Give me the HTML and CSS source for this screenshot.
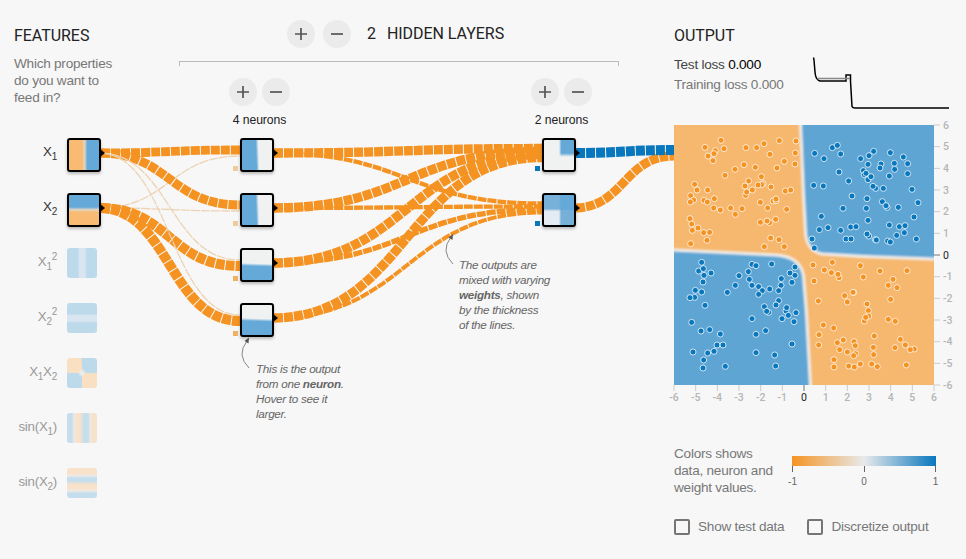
FILE: index.html
```html
<!DOCTYPE html>
<html lang="en">
<head>
<meta charset="utf-8">
<title>Neural network</title>
<link rel="stylesheet" href="styles.css">
</head>
<body>
<svg class="sprite" width="0" height="0">
  <symbol id="plus" viewBox="0 0 12 12"><path d="M6 0V12M0 6H12"/></symbol>
  <symbol id="minus" viewBox="0 0 12 12"><path d="M0 6H12"/></symbol>
</svg>
<main class="page">
  <svg class="links" width="966" height="559" id="links"></svg>

  <section class="features">
    <h4>FEATURES</h4>
    <p class="intro">Which properties<br>do you want to<br>feed in?</p>
    <ul class="feature-list">
      <li class="active"><span class="name">X<sub>1</sub></span><i class="node x1"></i></li>
      <li class="active"><span class="name">X<sub>2</sub></span><i class="node x2"></i></li>
      <li><span class="name">X<sub>1</sub><sup>2</sup></span><i class="tile x1sq"></i></li>
      <li><span class="name">X<sub>2</sub><sup>2</sup></span><i class="tile x2sq"></i></li>
      <li><span class="name">X<sub>1</sub>X<sub>2</sub></span><i class="tile x1x2"></i></li>
      <li><span class="name">sin(X<sub>1</sub>)</span><i class="tile sin1"></i></li>
      <li><span class="name">sin(X<sub>2</sub>)</span><i class="tile sin2"></i></li>
    </ul>
  </section>

  <section class="network">
    <header class="net-head">
      <button><svg><use href="#plus"/></svg></button>
      <button><svg><use href="#minus"/></svg></button>
      <span class="count">2</span><span>HIDDEN LAYERS</span>
    </header>
    <div class="bracket"></div>
    <div class="layers">
      <div class="layer">
        <div class="controls"><button><svg><use href="#plus"/></svg></button><button><svg><use href="#minus"/></svg></button></div>
        <div class="caption">4 neurons</div>
        <div class="neurons">
          <i class="node left"><b class="bias light"></b></i>
          <i class="node left"><b class="bias light"></b></i>
          <i class="node bottom"><b class="bias mid"></b></i>
          <i class="node bottom"><b class="bias mid"></b></i>
        </div>
      </div>
      <div class="layer">
        <div class="controls"><button><svg><use href="#plus"/></svg></button><button><svg><use href="#minus"/></svg></button></div>
        <div class="caption">2 neurons</div>
        <div class="neurons">
          <i class="node corner"><b class="bias blue"></b></i>
          <i class="node mixed"><b class="bias blue"></b></i>
        </div>
      </div>
    </div>
    <p class="callout one">This is the output<br>from one <b>neuron</b>.<br>Hover to see it<br>larger.</p>
    <p class="callout two">The outputs are<br>mixed with varying<br><b>weights</b>, shown<br>by the thickness<br>of the lines.</p>
  </section>

  <section class="output">
    <div class="out-head">
      <div class="metrics">
        <h4>OUTPUT</h4>
        <div class="loss test">Test loss <span>0.000</span></div>
        <div class="loss">Training loss 0.000</div>
      </div>
      <svg class="chart" width="140" height="56" fill="none">
        <path d="M1.5 .5L2 3L3 15Q3.5 21.5 6.500 23.300Q7.500 24 11 24H34V18H38.500V24L40 49.500Q40.500 51 43 51H137" stroke="#000" stroke-width="1.500"/>
        <path d="M5.500 21.500H38" stroke="#888" stroke-width="1.500"/>
      </svg>
    </div>
    <svg class="plot" width="292" height="282" id="plot">
      <defs>
        <clipPath id="frame"><rect width="260" height="260"/></clipPath>
        <filter id="soft" x="-10%" y="-10%" width="120%" height="120%"><feGaussianBlur stdDeviation="1.3"/></filter>
      </defs>
      <g clip-path="url(#frame)">
        <rect width="260" height="260" fill="#f6b76f"/>
        <g filter="url(#soft)" fill="#5fa5d4" stroke="#f0eeec" stroke-width="3">
          <path d="M126-10L126.500 0L129.500 71L131.500 108Q133 126 148 129L190 131.500L270 134.500V-10Z"/>
          <path d="M-10 124.500L0 125L103 130Q126 132 129.500 150L132.500 187L136.500 260V270H-10Z"/>
        </g>
      </g>
    </svg>
    <div class="legend">
      <p>Colors shows<br>data, neuron and<br>weight values.</p>
      <div class="scale">
        <div class="bar"></div>
        <div class="ticks"><span>-1</span><span>0</span><span>1</span></div>
      </div>
    </div>
    <div class="options">
      <label><i class="box"></i>Show test data</label>
      <label><i class="box"></i>Discretize output</label>
    </div>
  </section>
</main>
<script src="script.js"></script>
</body>
</html>
```
FILE: styles.css
```css
* { box-sizing: border-box; }
body { margin: 0; background: #f7f7f7; color: #777; font: 13.600px/17px "Liberation Sans", Arial, sans-serif; letter-spacing: -.25px; }
h4, p, ul { margin: 0; padding: 0; }
h4 { font: 400 16px/20px Roboto, sans-serif; color: #222; letter-spacing: -.05px; }
.sprite { position: absolute; }
.page { position: relative; display: grid; grid-template-columns: 110px 564px 292px; width: 966px; height: 559px; overflow: hidden; }
.links { position: absolute; left: 0; top: 0; }

.features { padding: 26px 0 0 14px; white-space: nowrap; }
.intro { margin-top: 9px; height: 83px; }
.feature-list { list-style: none; }
.feature-list li { display: flex; gap: 10px; height: 55px; color: #999; }
.feature-list .active { color: #333; }
.name { width: 43px; padding-top: 5px; text-align: right; font-size: 13.300px; }
sub, sup { font-size: 10px; line-height: 0; vertical-align: baseline; position: relative; }
sub { top: 4px; }
sup { top: -6px; }

.node { position: relative; flex: none; display: block; width: 34px; height: 34px; border: 2px solid #000; border-radius: 3px; box-shadow: 0 2px 3px rgba(0,0,0,.25); background-color: #f0f2f2; }
.node::after { content: ""; position: absolute; left: 31px; top: 9px; border: solid transparent; border-width: 4px 0 4px 5px; border-left-color: #000; }
.x1 { background: linear-gradient(90deg, #f9bb74 44%, #e3d5c0 52%, #64a9d8 61%); }
.x2 { background: linear-gradient(#64a9d8 40%, #dfd5c5 49%, #f9bb74 57%); }
.left { background: linear-gradient(88deg, #64a9d8 47%, #f0f2f2 56%); }
.bottom { background: linear-gradient(182deg, #f0f2f2 45%, #64a9d8 54%); }
.corner { background: linear-gradient(90deg, #f0f2f2 50%, transparent 58%), linear-gradient(#64a9d8 44%, #f0f2f2 56%); }
.mixed { background: linear-gradient(90deg, transparent 50%, #64a9d8 57%) 0 0 / 100% 50% no-repeat, linear-gradient(90deg, transparent 50%, #76b0d8 57%) 0 100% / 100% 50% no-repeat, linear-gradient(#77b0d9 45%, #e5ebf2 55%); }
.bias { position: absolute; left: -9px; top: 26px; width: 5px; height: 5px; }
.light { background: #eecb9c; }
.mid { background: #f0b063; }
.blue { background: #0877bd; }

.tile { display: block; width: 30px; height: 30px; border-radius: 3px; }
.x1sq { background: linear-gradient(90deg, #bddaeb 36%, #d9e6f1 42% 60%, #bddaeb 66%); }
.x2sq { background: linear-gradient(#bddaeb 36%, #d9e6f1 42% 60%, #bddaeb 66%); }
.x1x2 { background: radial-gradient(circle, #ecebe5 8%, transparent 20%), conic-gradient(#bddaeb 24%, #f9e0c2 26% 49%, #bddaeb 51% 74%, #f9e0c2 76% 99%, #bddaeb); }
.sin1 { background: linear-gradient(90deg, #c4deed 15%, #eee9e4 25%, #f9e2ca 32% 43%, #c4deed 57% 70%, #eee9e4 78%, #f9e2ca 85%); }
.sin2 { background: linear-gradient(#f9e2ca 18%, #eee9e4 25%, #c4deed 34% 42%, #f9e2ca 56% 68%, #eee9e4 76%, #c4deed 84%); }

button { display: grid; place-items: center; width: 28px; height: 28px; padding: 0; border: 0; border-radius: 50%; background: #ebebeb; }
button svg { width: 12px; height: 12px; fill: none; stroke: #555; stroke-width: 1.700; }
.network { position: relative; }
.net-head { display: flex; align-items: center; gap: 8px; height: 28px; margin: 20px 0 0 177px; font: 16px/20px Roboto, sans-serif; color: #222; letter-spacing: -.05px; }
.count { margin: 0 3px 0 8px; }
.bracket { width: 440px; height: 5px; margin: 13px 0 0 69px; border: 1px solid #bbb; border-bottom: 0; }
.layers { display: flex; gap: 241px; margin: 12px 0 0 119px; }
.layer { width: 61px; }
.controls { display: flex; gap: 5px; }
.caption { height: 32px; padding-top: 6px; font: 12.200px/17px "Liberation Sans", Arial, sans-serif; color: #222; text-align: center; white-space: nowrap; letter-spacing: -.1px; }
.neurons { display: grid; gap: 21px; padding-left: 11px; }
.callout { position: absolute; font-size: 11.700px; line-height: 15px; font-style: italic; color: #666; white-space: nowrap; letter-spacing: -.28px; }
.one { left: 146px; top: 361px; }
.two { left: 349px; top: 257px; }

.out-head { display: flex; height: 125px; padding-top: 26px; }
.metrics { width: 138px; white-space: nowrap; }
.loss { height: 20px; line-height: 20px; }
.test { margin-top: 9px; color: #444; }
.test span { color: #000; }
.chart { margin-top: 31px; }
.plot { display: block; overflow: visible; font: 500 10.500px Roboto, sans-serif; letter-spacing: 0; }
.legend { display: flex; margin-top: 38px; height: 74px; }
.legend p { width: 118px; white-space: nowrap; }
.scale { width: 144px; padding-top: 11px; }
.bar { height: 10px; background: linear-gradient(90deg, #f59322, #e8eaeb 50%, #0877bd); }
.ticks { display: flex; justify-content: space-between; margin: 0 -10px; font-size: 10px; line-height: 14px; color: #666; letter-spacing: 0; }
.ticks span { width: 21px; text-align: center; }
.ticks span::before { content: ""; display: block; width: 1px; height: 6px; margin: 0 auto 3px; background: #666; }
.options { display: flex; gap: 23px; white-space: nowrap; line-height: 16px; }
.options label { display: flex; gap: 8px; }
.box { width: 16px; height: 16px; border: 2px solid #757575; border-radius: 2px; }
```
FILE: script.js
```js
const NS = "http://www.w3.org/2000/svg";
function add(parent, tag, attrs, text) {
  const el = document.createElementNS(NS, tag);
  for (const k in attrs) el.setAttribute(k, attrs[k]);
  if (text !== undefined) el.textContent = text;
  parent.appendChild(el);
  return el;
}

// Links: start x, start y, end x, end y, width, colour
const orange = "#f59322", blue = "#0877bd", faint = "#ecd3b4";
const links = [
  [99,153,240,150,8.8,orange], [99,208,240,156,1.300,faint],
  [99,153,240,205,9,orange], [99,208,240,211,1.300,faint],
  [99,153,240,260,1.300,faint], [99,208,240,266,10,orange],
  [99,153,240,315,1.300,faint], [99,208,240,321,10,orange],
  [272,153,542,148.5,9.3,orange], [272,208,542,151.500,9.500,orange],
  [272,263,542,154.500,9.500,orange], [272,318,542,157.500,9.300,orange],
  [272,153,542,203.500,4.300,orange], [272,208,542,206.500,4.300,orange],
  [272,263,542,209.500,5.300,orange], [272,318,542,212.500,4,orange],
  [574,208,674,156,9,orange], [574,153,674,150,10,blue]
];
const svg = document.getElementById("links");
for (const [x1, y1, x2, y2, w, c] of links) {
  const m = (x1 + x2) / 2;
  add(svg, "path", { d: `M${x1} ${y1}C${m} ${y1} ${m} ${y2} ${x2} ${y2}`, fill: "none", stroke: c, "stroke-width": w, "stroke-dasharray": "9 1", "stroke-dashoffset": -2 });
}

// Pointer arrows of the two notes
for (const [d, head] of [
  ["M249 368Q236 355 247 341", "249,337.500 248.500,343.500 244.500,341"],
  ["M453 264Q440 251 451 237", "453,234 452.500,240 448.500,237.500"]
]) {
  add(svg, "path", { d, fill: "none", stroke: "#888", "stroke-width": 1 });
  add(svg, "polygon", { points: head, fill: "#555" });
}

// Sample points, each group in thirds of a pixel from its own origin
const groups = [
  [-4, -5, orange, "153,61 105,82 162,86 136,92 132,101 114,108 129,122 228,83 260,83 282,71 328,62 378,63 300,103 376,99 343,124 375,132 321,144 256,142 222,134 195,148 165,166 274,170 236,183 279,191 275,194 264,195 225,198 303,201 247,210 227,226 230,216 346,213 362,210 74,193 81,210 113,210 62,227 71,240 61,246 102,241 112,246 133,236 131,264 151,270 182,264 216,266 196,283 271,247 309,243 318,242 318,237 293,264 350,268 60,296 65,312 67,331 84,324 101,338 119,337 111,361 62,371 271,307 299,308 291,303 317,298 302,354 327,359 283,380 343,380"],
  [126, -5, blue, "44,100 72,116 97,83 112,76 122,102 117,156 146,183 41,196 70,198 156,228 129,265 64,289 58,329 84,323 122,331 152,321 168,320 138,357 153,357 36,357 43,384 182,116 207,107 221,94 271,98 310,111 204,133 243,132 240,144 283,130 284,148 323,131 323,161 190,152 193,164 204,179 198,160 213,170 268,168 227,205 219,199 250,205 336,208 201,236 199,265 204,301 247,245 261,262 258,257 295,262 354,248 342,291 268,315 298,320 315,317 313,338 290,346 206,348 201,342 226,359 229,360 263,363 271,366 349,357"],
  [-4, 120, blue, "95,52 86,78 100,71 102,91 123,84 99,111 76,136 95,141 74,157 60,158 105,181 65,232 93,258 119,254 151,267 141,300 159,300 113,324 132,319 69,321 101,345 99,369 166,364 172,142 196,121 207,92 235,80 246,58 258,62 305,57 238,103 246,121 266,125 277,137 266,148 299,132 334,101 333,121 326,137 360,84 375,66 375,91 366,112 326,167 318,180 283,185 296,202 290,199 348,198 350,188 355,211 378,203 336,221 372,230 246,221 258,268 287,257 366,297 258,323 314,330 317,363"],
  [126, 120, orange, "39,60 97,52 73,75 94,83 117,98 114,88 42,108 181,62 190,96 240,78 321,77 279,103 265,121 291,128 55,168 134,152 161,142 159,142 142,171 272,163 201,177 205,197 206,213 193,228 197,217 265,223 286,229 70,240 101,249 57,269 56,300 112,293 130,285 162,290 166,302 119,314 142,321 167,326 161,332 102,344 102,366 146,363 163,366 181,357 223,273 220,307 221,329 215,357 232,365 285,308 301,283 316,300 343,312 331,314 319,360"]
];
const plot = document.getElementById("plot");
for (const [ox, oy, fill, data] of groups) {
  for (const p of data.split(" ")) {
    const [x, y] = p.split(",");
    add(plot, "circle", { cx: ox + x / 3, cy: oy + y / 3, r: 3, fill, stroke: "#fff", "stroke-opacity": .75 });
  }
}

// Axes from -6 to 6
for (let v = -6; v <= 6; v++) {
  const x = 130 + v * 21.667, y = 130 - v * 21.667;
  const line = v ? "#ccc" : "#777", fill = v ? "#b5b5b5" : "#222", weight = v ? 500 : 400;
  add(plot, "path", { d: `M${x} 260v6`, stroke: line });
  add(plot, "path", { d: `M260 ${y}h6`, stroke: line });
  add(plot, "text", { x, y: 276, "text-anchor": "middle", fill, "font-weight": weight }, v);
  add(plot, "text", { x: 269, y: y + 3.700, fill, "font-weight": weight }, v);
}
```
